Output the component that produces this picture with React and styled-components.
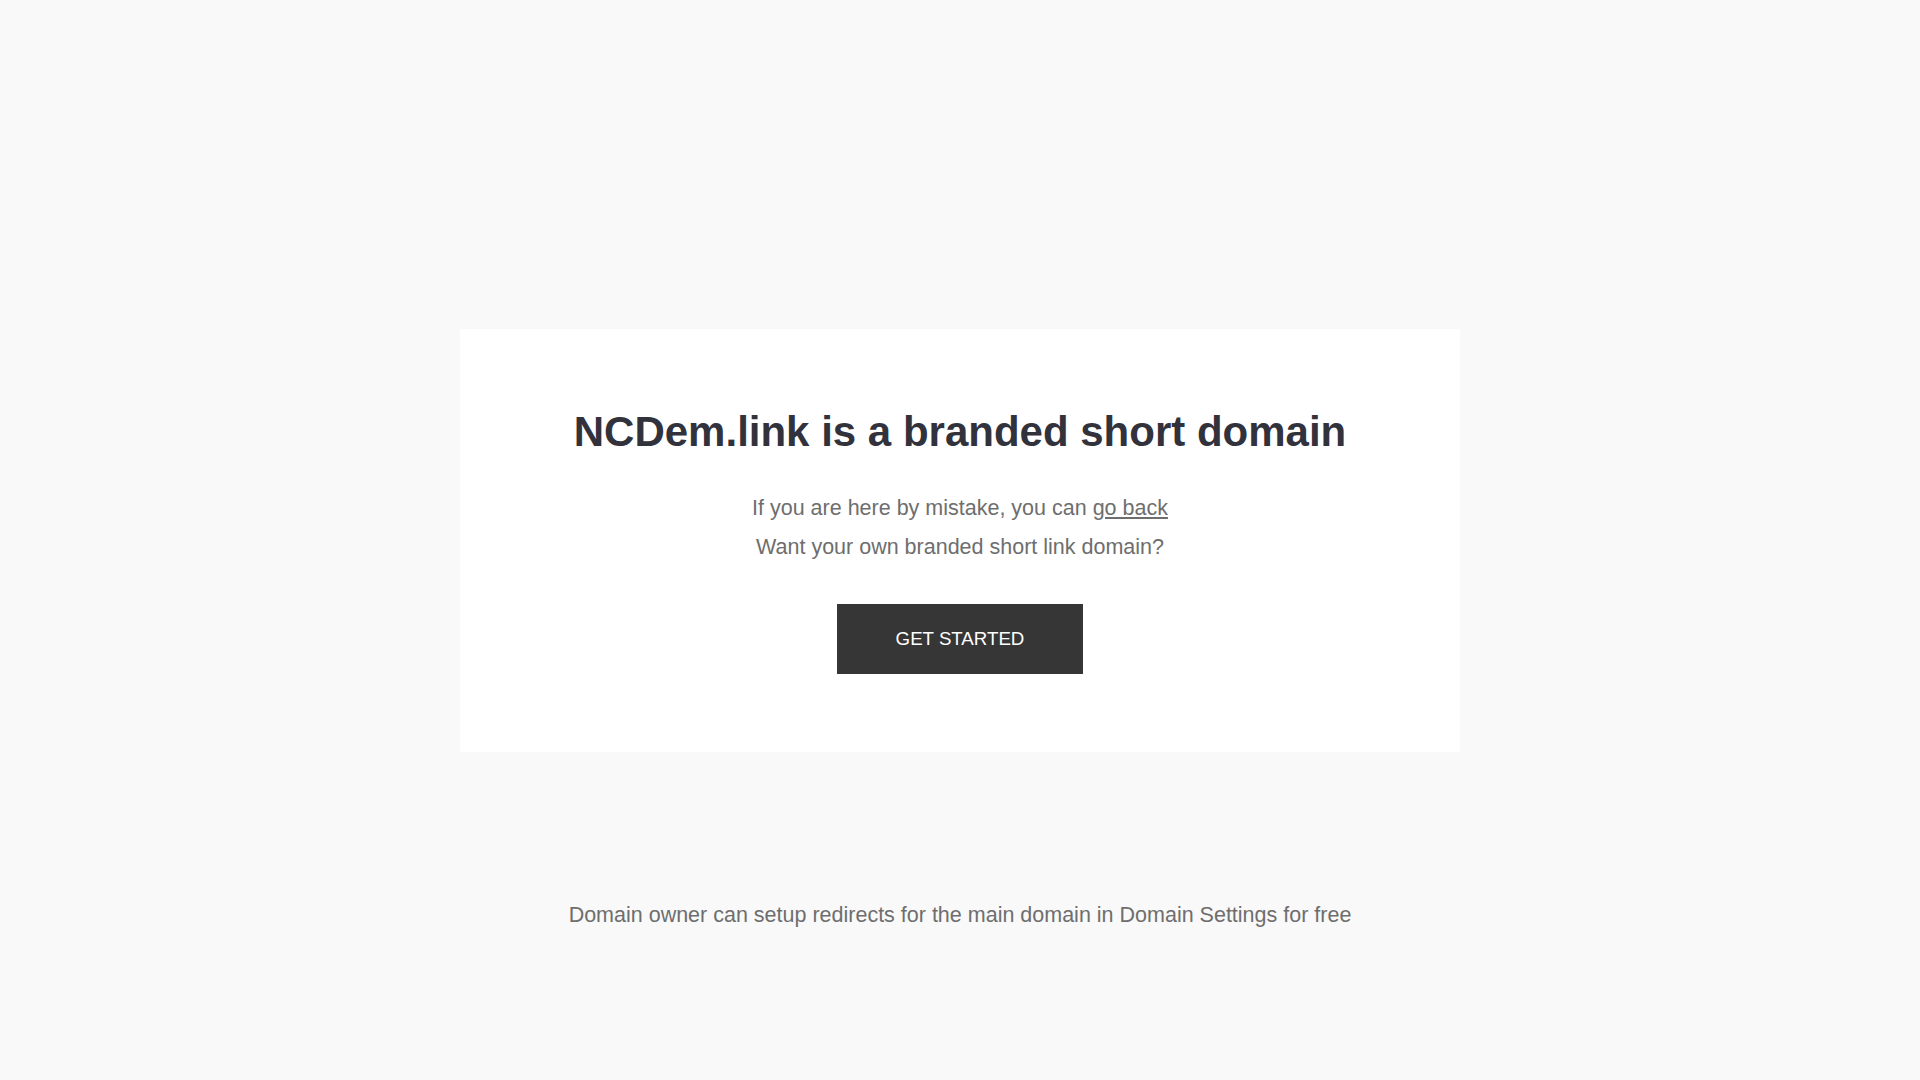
import React from "react";
import styled, { createGlobalStyle } from "styled-components";

const GlobalStyle = createGlobalStyle`
  html, body {
    margin: 0;
    padding: 0;
    background: #F9F9F9;
    font-family: "Liberation Sans", Arial, sans-serif;
  }
`;

const Page = styled.div`
  min-height: 100vh;
  display: grid;
  grid-template-rows: 1fr auto 1fr;
  justify-items: center;
`;

const Card = styled.div`
  grid-row: 2;
  width: 1000px;
  box-sizing: border-box;
  background: #FFFFFF;
  padding: 78px 40px 78px;
  display: flex;
  flex-direction: column;
  align-items: center;
  text-align: center;
`;

const Title = styled.h1`
  margin: 0;
  font-size: 42px;
  line-height: 50px;
  font-weight: bold;
  color: #32323C;
`;

const Lines = styled.div`
  margin-top: 32px;
  font-size: 21.5px;
  line-height: 39px;
  color: #6E6E6E;
`;

const BackLink = styled.a`
  color: #6E6E6E;
  text-decoration: underline;
  cursor: pointer;
`;

const Button = styled.a`
  margin-top: 37px;
  display: flex;
  align-items: center;
  justify-content: center;
  width: 246px;
  height: 70px;
  background: #363636;
  color: #FFFFFF;
  font-size: 18.7px;
  text-transform: uppercase;
  text-decoration: none;
  cursor: pointer;
`;

const Footer = styled.div`
  grid-row: 3;
  align-self: center;
  font-size: 21.5px;
  color: #6E6E6E;
`;

export default function App() {
    return (
        <>
            <GlobalStyle/>
            <Page>
                <Card>
                    <Title>NCDem.link is a branded short domain</Title>
                    <Lines>
                        <div>If you are here by mistake, you can <BackLink>go back</BackLink></div>
                        <div>Want your own branded short link domain?</div>
                    </Lines>
                    <Button>Get started</Button>
                </Card>
                <Footer>Domain owner can setup redirects for the main domain in Domain Settings for free</Footer>
            </Page>
        </>
    );
}
